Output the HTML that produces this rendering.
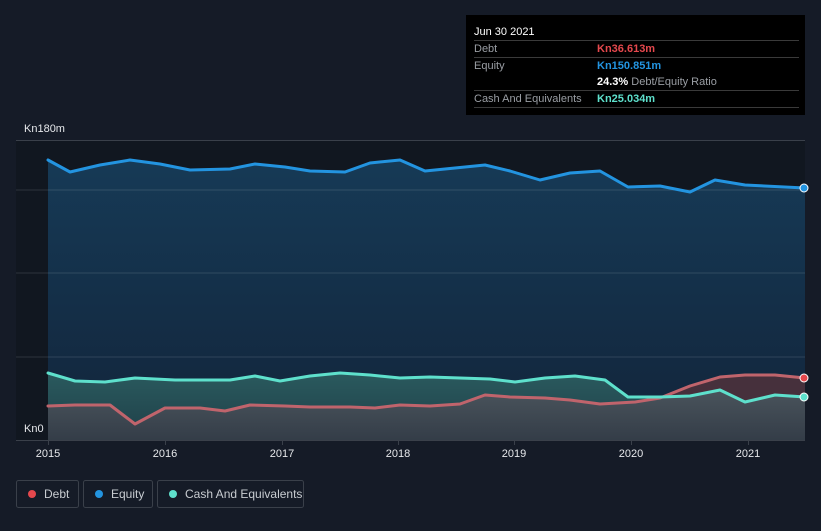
<!DOCTYPE html>
<html><head><meta charset="utf-8"><style>
body{margin:0;background:#151b27;width:821px;height:526px;overflow:hidden;font-family:"Liberation Sans",sans-serif}
svg text{font-family:"Liberation Sans",sans-serif}
</style></head><body>
<svg width="821" height="526" viewBox="0 0 821 526" xmlns="http://www.w3.org/2000/svg">
<defs>
<linearGradient id="eq" x1="0" y1="0" x2="0" y2="1"><stop offset="0" stop-color="#163a56"/><stop offset="1" stop-color="#12243a"/></linearGradient>
<linearGradient id="ca" x1="0" y1="0" x2="0" y2="1"><stop offset="0" stop-color="#2a5a5e"/><stop offset="1" stop-color="#1f3f48"/></linearGradient>
<linearGradient id="de" x1="0" y1="0" x2="0" y2="1"><stop offset="0" stop-color="#4a545c"/><stop offset="1" stop-color="#343d48"/></linearGradient>
</defs>
<rect x="16" y="140" width="789" height="300" fill="#111720"/>
<polygon fill="url(#eq)" points="48,440 48,160 70,172 100,165 130,160 160,164 190,170 230,169 255,164 285,167 310,171 345,172 370,163 400,160 425,171 455,168 485,165 510,171 540,180 570,173 600,171 628,187 660,186 690,192 715,180 745,185 805,188 805,440"/>
<polygon fill="url(#ca)" points="48,440 48,373 75,381 105,382 135,378 175,380 230,380 255,376 280,381 310,376 340,373 370,375 400,378 430,377 490,379 515,382 545,378 575,376 605,380 628,397 660,397 690,396 720,390 745,402 775,395 805,397 805,440"/>
<polygon fill="#46303c" points="660,398 690,386 720,377 745,375 775,375 805,378 805,397 775,395 745,402 720,390 690,396"/>
<polygon fill="url(#de)" points="48,440 48,406 75,405 110,405 135,424 165,408 200,408 225,411 250,405 285,406 310,407 350,407 375,408 400,405 430,406 460,404 485,395 510,397 545,398 570,400 600,404 635,402 660,398 690,396 720,390 745,402 775,395 805,397 805,440"/>
<g stroke="#ffffff" stroke-opacity="0.12" stroke-width="1">
<line x1="16" y1="190" x2="805" y2="190"/><line x1="16" y1="273" x2="805" y2="273"/><line x1="16" y1="357" x2="805" y2="357"/>
</g>
<line x1="16" y1="140.5" x2="805" y2="140.5" stroke="#3a404a"/>
<line x1="16" y1="440.5" x2="805" y2="440.5" stroke="#3a404a"/>
<g stroke="#3a404a"><line x1="48.5" y1="440" x2="48.5" y2="445"/><line x1="165.5" y1="440" x2="165.5" y2="445"/><line x1="282.5" y1="440" x2="282.5" y2="445"/><line x1="398.5" y1="440" x2="398.5" y2="445"/><line x1="514.5" y1="440" x2="514.5" y2="445"/><line x1="631.5" y1="440" x2="631.5" y2="445"/><line x1="748.5" y1="440" x2="748.5" y2="445"/></g>
<g fill="none" stroke-width="3" stroke-linejoin="round" stroke-linecap="round">
<polyline stroke="#c0646c" points="48,406 75,405 110,405 135,424 165,408 200,408 225,411 250,405 285,406 310,407 350,407 375,408 400,405 430,406 460,404 485,395 510,397 545,398 570,400 600,404 635,402 660,398 690,386 720,377 745,375 775,375 805,378"/>
<polyline stroke="#5ee0cc" points="48,373 75,381 105,382 135,378 175,380 230,380 255,376 280,381 310,376 340,373 370,375 400,378 430,377 490,379 515,382 545,378 575,376 605,380 628,397 660,397 690,396 720,390 745,402 775,395 805,397"/>
<polyline stroke="#2394e0" points="48,160 70,172 100,165 130,160 160,164 190,170 230,169 255,164 285,167 310,171 345,172 370,163 400,160 425,171 455,168 485,165 510,171 540,180 570,173 600,171 628,187 660,186 690,192 715,180 745,185 805,188"/>
</g>
<circle cx="804" cy="188" r="4" fill="#2394e0" stroke="#fff" stroke-width="1"/>
<circle cx="804" cy="378" r="4" fill="#e5484d" stroke="#fff" stroke-width="1"/>
<circle cx="804" cy="397" r="4" fill="#5ee0cc" stroke="#fff" stroke-width="1"/>
<g fill="#e6e8eb" font-size="11">
<text x="24" y="132">Kn180m</text><text x="24" y="432">Kn0</text>
<text x="48" y="457" text-anchor="middle">2015</text><text x="165" y="457" text-anchor="middle">2016</text><text x="282" y="457" text-anchor="middle">2017</text><text x="398" y="457" text-anchor="middle">2018</text><text x="514" y="457" text-anchor="middle">2019</text><text x="631" y="457" text-anchor="middle">2020</text><text x="748" y="457" text-anchor="middle">2021</text>
</g>
<rect x="466" y="15" width="339" height="100" fill="#000"/>
<g stroke="#3a3a3a"><line x1="474" y1="40.5" x2="799" y2="40.5"/><line x1="474" y1="57.5" x2="799" y2="57.5"/><line x1="474" y1="90.5" x2="799" y2="90.5"/><line x1="474" y1="107.5" x2="799" y2="107.5"/></g>
<g font-size="11">
<text x="474" y="35" fill="#fff">Jun 30 2021</text>
<text x="474" y="52" fill="#9a9ea4">Debt</text><text x="597" y="52" fill="#e5484d" font-weight="bold">Kn36.613m</text>
<text x="474" y="69" fill="#9a9ea4">Equity</text><text x="597" y="69" fill="#2394e0" font-weight="bold">Kn150.851m</text>
<text x="597" y="85" fill="#fff" font-weight="bold">24.3%<tspan fill="#9a9ea4" font-weight="normal"> Debt/Equity Ratio</tspan></text>
<text x="474" y="102" fill="#9a9ea4">Cash And Equivalents</text><text x="597" y="102" fill="#5ee0cc" font-weight="bold">Kn25.034m</text>
</g>
<g fill="none" stroke="#3a404a"><rect x="16.5" y="480.5" width="62" height="27" rx="2"/><rect x="83.5" y="480.5" width="69" height="27" rx="2"/><rect x="157.5" y="480.5" width="146" height="27" rx="2"/></g>
<circle cx="32" cy="494" r="4" fill="#e5484d"/><circle cx="99" cy="494" r="4" fill="#2394e0"/><circle cx="173" cy="494" r="4" fill="#5ee0cc"/>
<g fill="#c8ccd1" font-size="12"><text x="44" y="498">Debt</text><text x="111" y="498">Equity</text><text x="185" y="498">Cash And Equivalents</text></g>
</svg>
</body></html>
